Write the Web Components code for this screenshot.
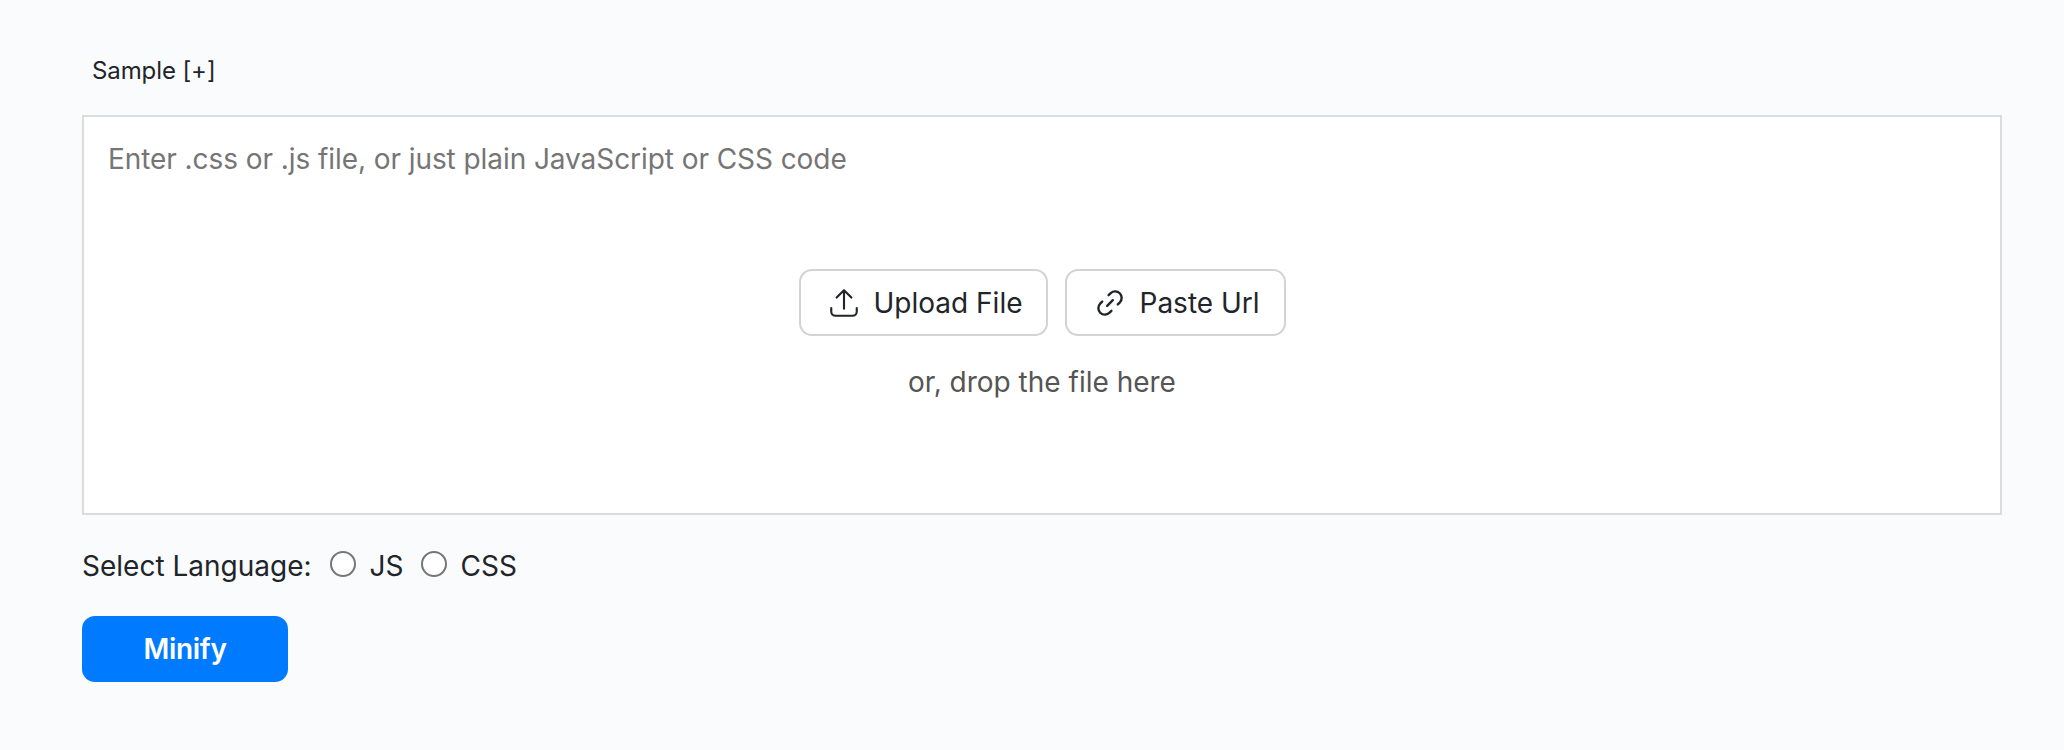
<!DOCTYPE html>
<html>
<head>
<meta charset="utf-8">
<title>Minify</title>
<style>
  html, body { margin: 0; padding: 0; }
  body { background: #fafbfd; font-family: Inter, "Liberation Sans", sans-serif; color: #212529; }
</style>
</head>
<body>
<minify-page></minify-page>

<script>
  class IconButton extends HTMLElement {
    constructor() {
      super();
      this.attachShadow({ mode: 'open' });
      this.shadowRoot.innerHTML = `
        <style>
          :host { display: inline-flex; }
          .btn {
            display: flex;
            align-items: center;
            gap: var(--gap, 13px);
            width: var(--width, 249px);
            height: 67px;
            box-sizing: border-box;
            padding-left: var(--pad, 26px);
            border: 2px solid #d3d3d3;
            border-radius: 13px;
            background: #fff;
            font-size: 28px;
            color: #212529;
            cursor: pointer;
            white-space: nowrap;
          }
          ::slotted(svg) { width: 34px; height: 34px; flex: none; }
        </style>
        <div class="btn"><slot name="icon"></slot><slot></slot></div>
      `;
    }
  }

  class DropArea extends HTMLElement {
    constructor() {
      super();
      this.attachShadow({ mode: 'open' });
      this.shadowRoot.innerHTML = `
        <style>
          :host {
            display: flex;
            flex-direction: column;
            box-sizing: border-box;
            height: 400px;
            border: 2px solid #dcdcdc;
            background: #fff;
            padding: 25px 24px;
          }
          .placeholder { font-size: 28px; line-height: 34px; color: #757575; letter-spacing: -0.07px; }
          .actions {
            display: flex;
            justify-content: center;
            gap: 17px;
            margin-top: 93px;
          }
          .hint {
            margin-top: 29px;
            text-align: center;
            font-size: 28px;
            line-height: 34px;
            color: #555;
          }
        </style>
        <div class="placeholder">Enter .css or .js file, or just plain JavaScript or CSS code</div>
        <div class="actions"><slot></slot></div>
        <div class="hint">or, drop the file here</div>
      `;
    }
  }

  class LanguagePicker extends HTMLElement {
    constructor() {
      super();
      this.attachShadow({ mode: 'open' });
      this.shadowRoot.innerHTML = `
        <style>
          :host {
            display: flex;
            align-items: center;
            height: 34px;
            font-size: 28px;
            color: #212529;
          }
          .radio {
            width: 26px;
            height: 26px;
            box-sizing: border-box;
            border: 2px solid #767676;
            border-radius: 50%;
            background: #fff;
            margin: -4px 14px 0 18px;
          }
          .radio + span + .radio { margin-left: 17px; }
        </style>
        <span>Select Language:</span>
        <span class="radio"></span><span>JS</span>
        <span class="radio"></span><span>CSS</span>
      `;
    }
  }

  class MinifyPage extends HTMLElement {
    constructor() {
      super();
      this.attachShadow({ mode: 'open' });
      this.shadowRoot.innerHTML = `
        <style>
          :host { display: block; height: 750px; box-sizing: border-box; padding: 56px 62px 0 82px; }
          .sample { font-size: 24px; line-height: 30px; padding-left: 10px; margin-bottom: 29px; letter-spacing: -0.1px; }
          language-picker { margin-top: 34px; }
          .minify {
            display: flex;
            align-items: center;
            justify-content: center;
            width: 206px;
            height: 66px;
            margin-top: 33px;
            border-radius: 13px;
            background: #007bff;
            color: #fff;
            font-size: 28px;
            font-weight: 600;
            letter-spacing: -0.3px;
          }
        </style>
        <div class="sample">Sample [+]</div>
        <slot></slot>
        <language-picker></language-picker>
        <div class="minify">Minify</div>
      `;
    }

    connectedCallback() {
      this.innerHTML = `
        <drop-area>
          <icon-button style="--pad: 26.5px; --gap: 12.5px">
            <svg slot="icon" viewBox="0 0 24 24" fill="none" stroke="#212529" stroke-width="1.5" stroke-linecap="round" stroke-linejoin="round">
              <path d="M12 16V3M6.800 8.200 12 3l5.200 5.200M3 15.500v2.500a3 3 0 0 0 3 3h12a3 3 0 0 0 3-3v-2.500"/>
            </svg>
            Upload File
          </icon-button>
          <icon-button style="--width: 221px">
            <svg slot="icon" viewBox="0 0 24 24" fill="none" stroke="#212529" stroke-width="1.7" stroke-linecap="round" stroke-linejoin="round">
              <path d="M10 14l4-4M11 6.500l1.500-1.500a4.600 4.600 0 0 1 6.500 6.500L17.500 13M13 17.500 11.500 19A4.600 4.600 0 0 1 5 12.500L6.500 11"/>
            </svg>
            Paste Url
          </icon-button>
        </drop-area>
      `;
    }
  }

  customElements.define('icon-button', IconButton);
  customElements.define('drop-area', DropArea);
  customElements.define('language-picker', LanguagePicker);
  customElements.define('minify-page', MinifyPage);
</script>
</body>
</html>
